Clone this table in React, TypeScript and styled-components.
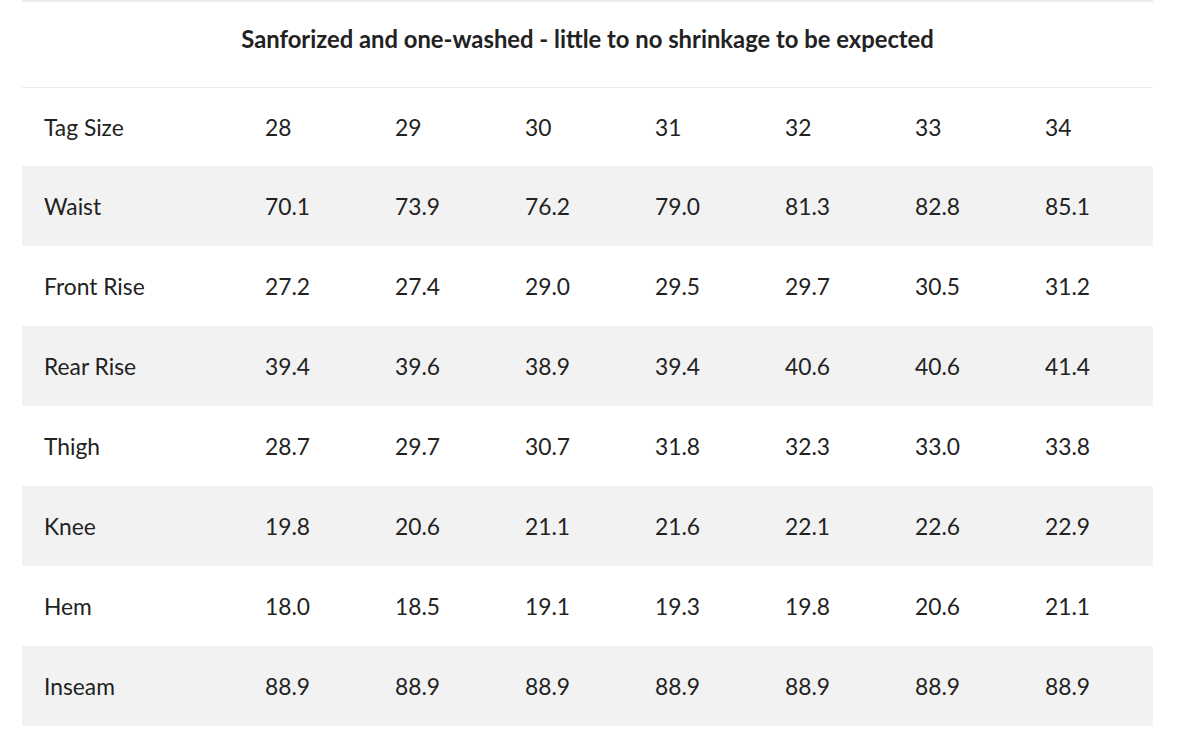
import React from "react";
import styled, { createGlobalStyle } from "styled-components";

const Global = createGlobalStyle`
  html, body { margin: 0; padding: 0; background: #fff; }
  body { font-family: Lato, "Noto Sans", sans-serif; color: #222; }
`;

const Page = styled.div`
  padding: 0 47px 0 22px;
`;

const Table = styled.table`
  width: 1131px;
  border-collapse: collapse;
  table-layout: fixed;
  border-top: 2px solid #ececec;
`;

const TitleCell = styled.th`
  height: 86px;
  padding: 0 0 10px;
  box-sizing: border-box;
  text-align: center;
  font-size: 23.8px;
  font-weight: 700;
  color: #222;
  border-bottom: 1px solid #ececec;
`;

const Row = styled.tr<{ $shade: boolean; $head?: boolean }>`
  background: ${(p) => (p.$shade ? "#f2f2f2" : "#fff")};
  height: ${(p) => (p.$head ? "79px" : "80px")};
  & + & > td { border-top: 1px solid #ececec; }
`;

const Cell = styled.td`
  padding: 0 0 0 22px;
  box-sizing: border-box;
  font-size: 22.8px;
  color: #222;
  vertical-align: middle;
  white-space: nowrap;
`;

const LabelCol = styled.col`
  width: 221px;
`;

const SizeCol = styled.col`
  width: 130px;
`;

const sizes = ["28", "29", "30", "31", "32", "33", "34"];
const rows: [string, string[]][] = [
  ["Waist", ["70.1", "73.9", "76.2", "79.0", "81.3", "82.8", "85.1"]],
  ["Front Rise", ["27.2", "27.4", "29.0", "29.5", "29.7", "30.5", "31.2"]],
  ["Rear Rise", ["39.4", "39.6", "38.9", "39.4", "40.6", "40.6", "41.4"]],
  ["Thigh", ["28.7", "29.7", "30.7", "31.8", "32.3", "33.0", "33.8"]],
  ["Knee", ["19.8", "20.6", "21.1", "21.6", "22.1", "22.6", "22.9"]],
  ["Hem", ["18.0", "18.5", "19.1", "19.3", "19.8", "20.6", "21.1"]],
  ["Inseam", ["88.9", "88.9", "88.9", "88.9", "88.9", "88.9", "88.9"]],
];

export default function App() {
  return (
    <Page>
      <Global />
      <Table>
        <colgroup>
          <LabelCol />
          {sizes.map((s) => (
            <SizeCol key={s} />
          ))}
        </colgroup>
        <thead>
          <tr>
            <TitleCell colSpan={8}>Sanforized and one-washed - little to no shrinkage to be expected</TitleCell>
          </tr>
        </thead>
        <tbody>
          <Row $shade={false} $head>
            <Cell>Tag Size</Cell>
            {sizes.map((s) => (
              <Cell key={s}>{s}</Cell>
            ))}
          </Row>
          {rows.map(([label, vals], i) => (
            <Row key={label} $shade={i % 2 === 0}>
              <Cell>{label}</Cell>
              {vals.map((v, j) => (
                <Cell key={j}>{v}</Cell>
              ))}
            </Row>
          ))}
        </tbody>
      </Table>
    </Page>
  );
}
